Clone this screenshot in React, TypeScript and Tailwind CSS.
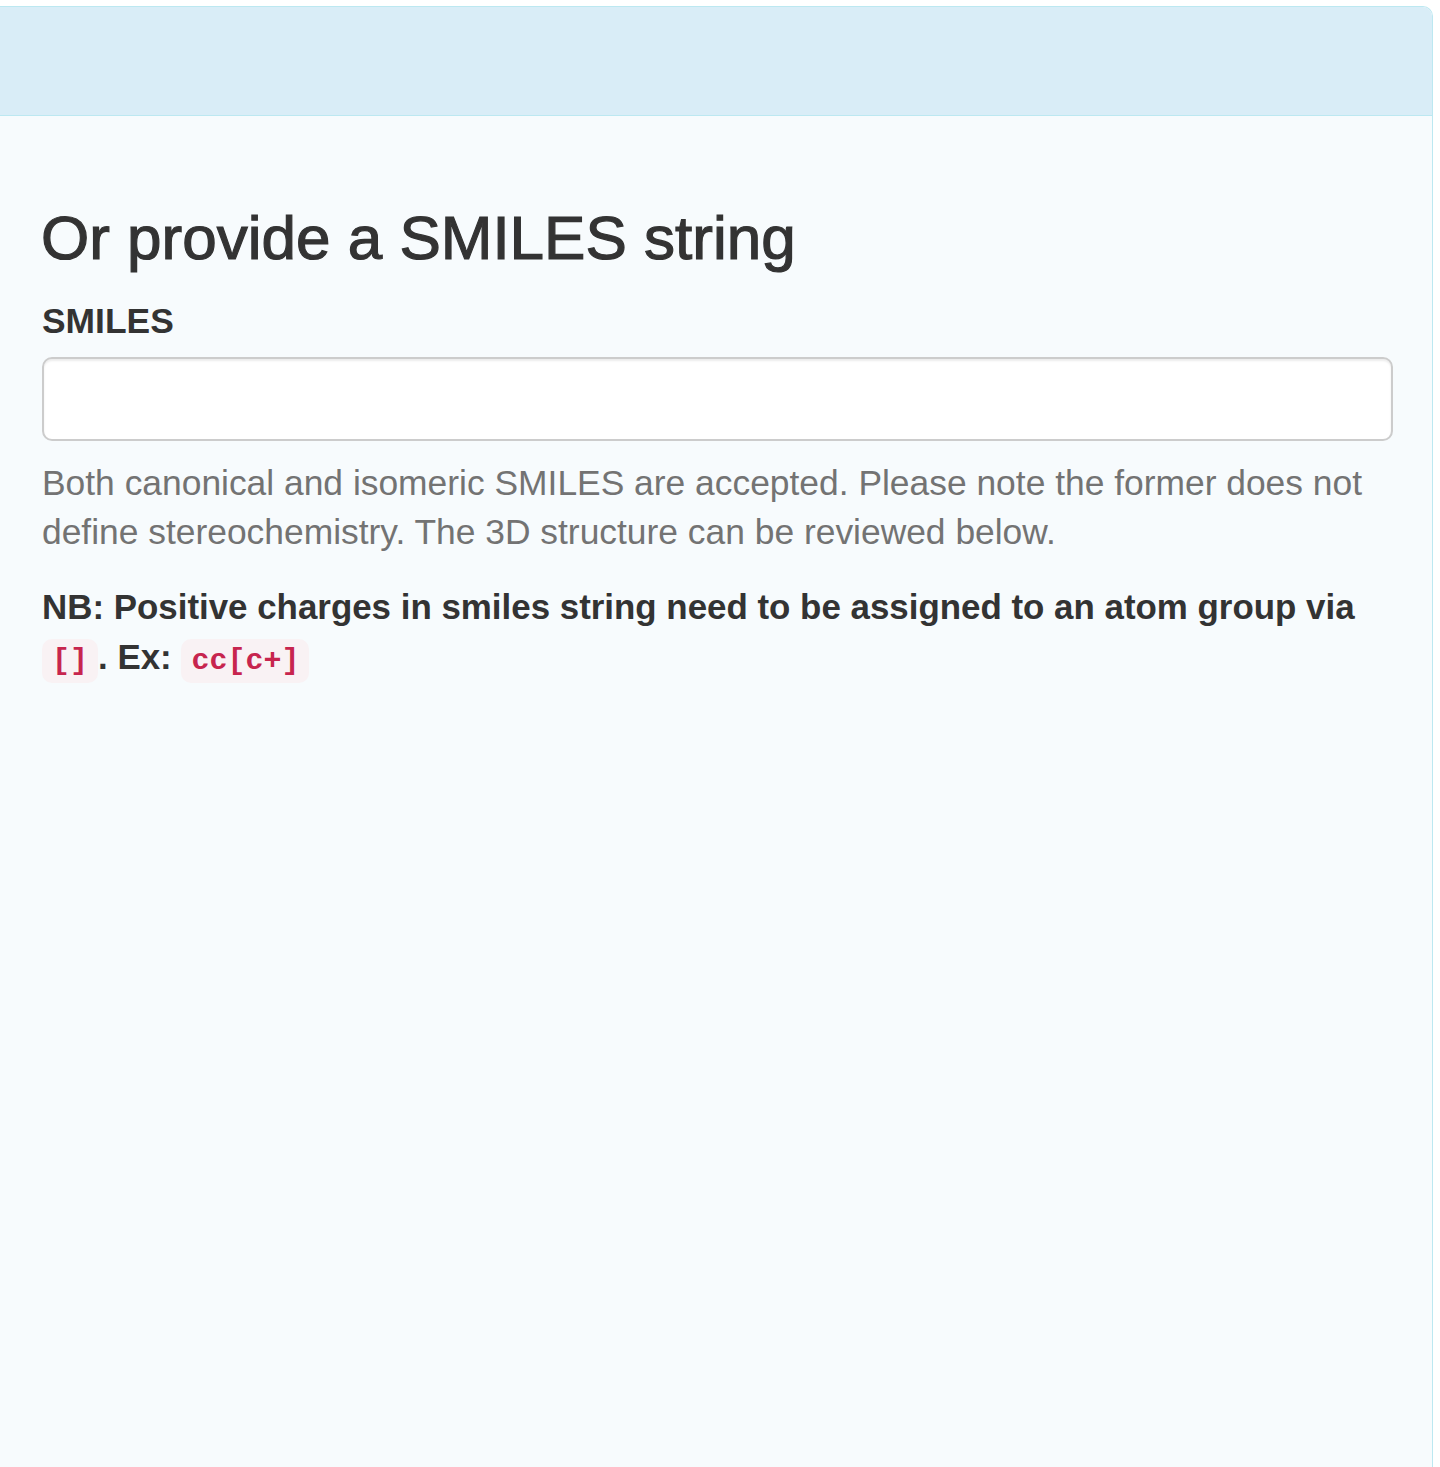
export default function App() {
  return (
    <div className="min-h-[1467px] bg-white pt-[6px] pr-[7px] font-['Liberation_Sans',Arial,sans-serif] text-[#333]">
      <div className="flex min-h-[1461px] flex-col overflow-hidden rounded-tr-[10px] border border-l-0 border-b-0 border-[#bce8f1]">
        <div className="h-[109px] shrink-0 border-b border-[#bce8f1] bg-[#d9edf7]" />
        <div className="flex-1 bg-[#f7fbfd] pl-[42px] pr-[39px] pt-[88px]">
          <h3 className="-ml-px text-[62px] leading-[68px] font-medium [-webkit-text-stroke:1.2px_#333]">Or provide a SMILES string</h3>
          <label className="mt-[25px] block text-[35.4px] leading-[49px] font-bold">SMILES</label>
          <input
            type="text"
            className="mt-[11px] block h-[84px] w-full rounded-[10px] border-2 border-[#ccc] bg-white px-[30px] text-[34px] shadow-[inset_0_2px_2px_rgba(0,0,0,0.075)] outline-none"
          />
          <p className="mt-[18px] text-[35.4px] leading-[49px] text-[#737373]">
            Both canonical and isomeric SMILES are accepted. Please note the former does not define stereochemistry. The 3D structure can be reviewed below.
          </p>
          <p className="mt-[25px] text-[34.9px] leading-[50px] font-bold">
            NB: Positive charges in smiles string need to be assigned to an atom group via{' '}
            <code className="rounded-[10px] bg-[#f9f2f4] px-[10px] py-[5px] font-['Liberation_Mono',Menlo,monospace] text-[30px] text-[#c7254e]">[]</code>
            . Ex:{' '}
            <code className="rounded-[10px] bg-[#f9f2f4] px-[10px] py-[5px] font-['Liberation_Mono',Menlo,monospace] text-[30px] text-[#c7254e]">cc[c+]</code>
          </p>
        </div>
      </div>
    </div>
  );
}
